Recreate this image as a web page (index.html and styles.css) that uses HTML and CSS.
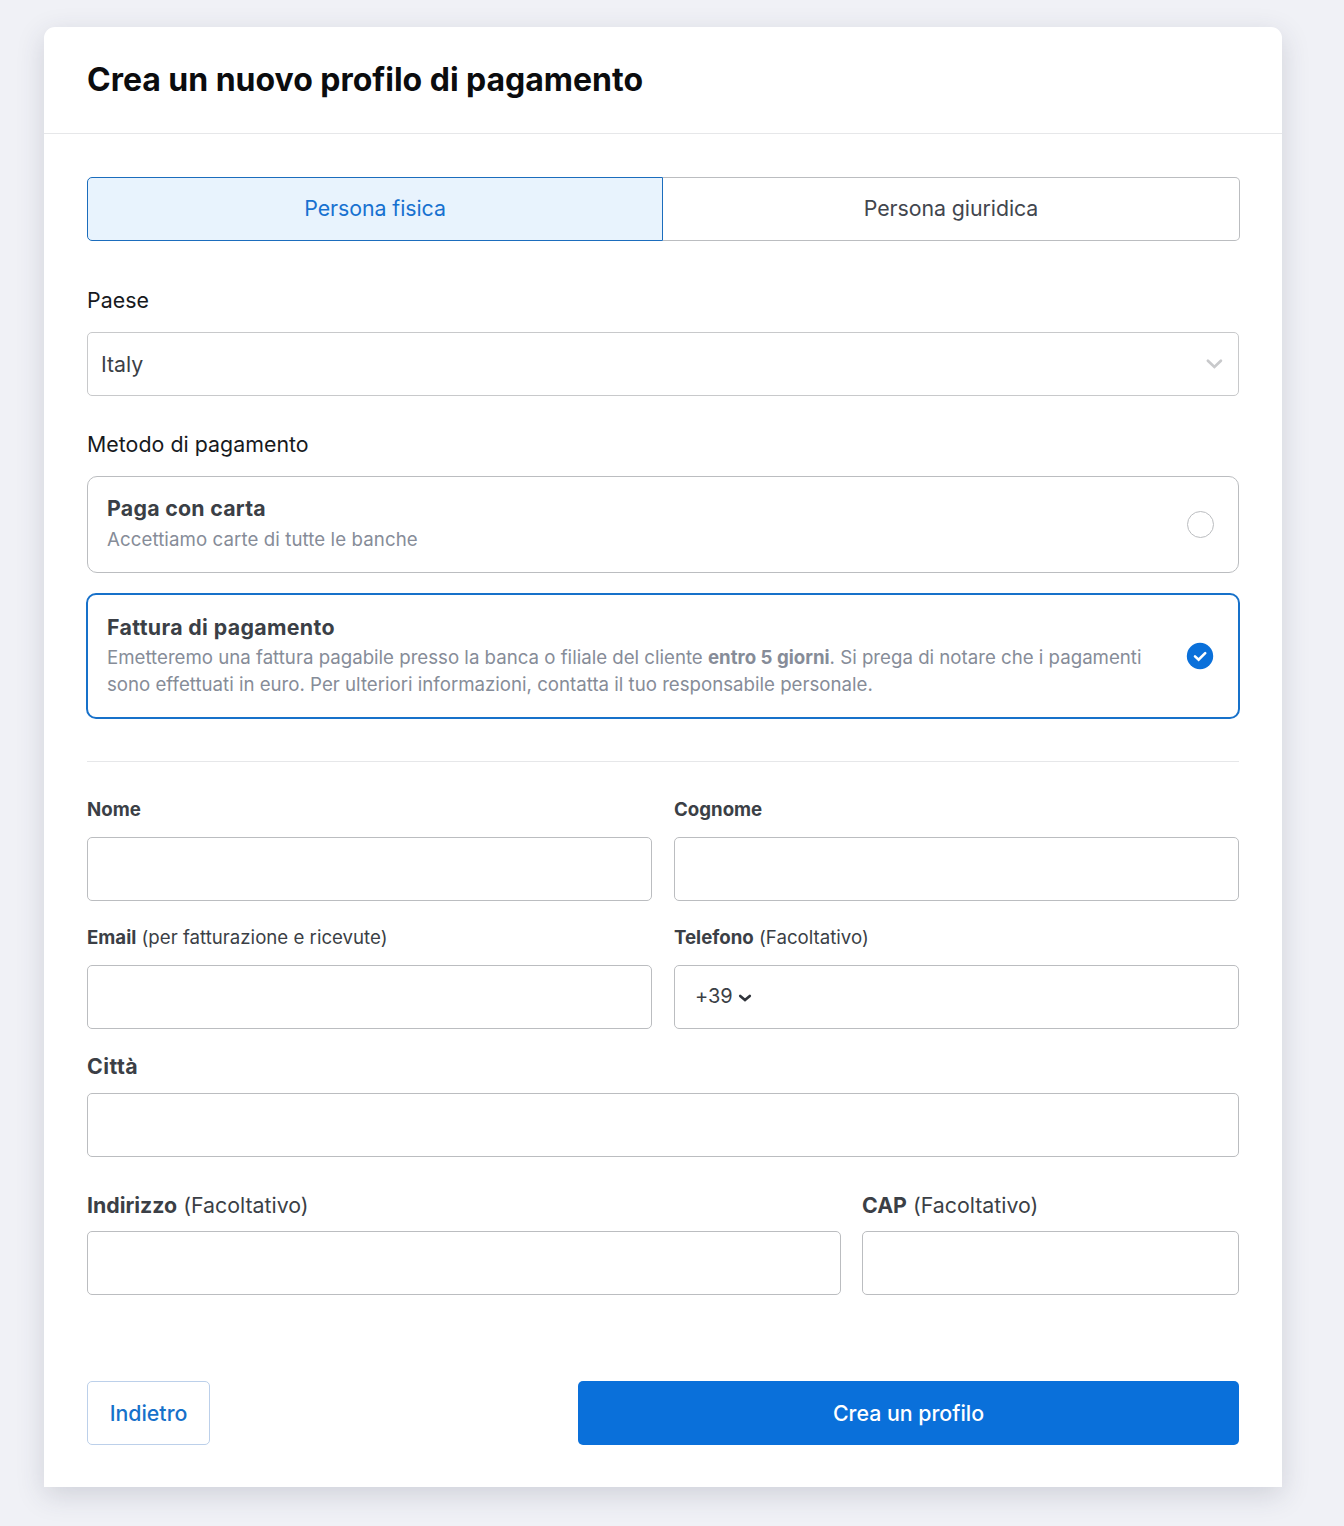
FILE: index.html
```html
<!DOCTYPE html>
<html lang="it">
<head>
<meta charset="utf-8">
<title>Crea un nuovo profilo di pagamento</title>
<link rel="stylesheet" href="styles.css">
</head>
<body>
<main class="card">
  <header class="card-header"><h1>Crea un nuovo profilo di pagamento</h1></header>
  <form class="card-body">
    <div class="tabs">
      <button type="button" class="tab tab-active"><span>Persona fisica</span></button>
      <button type="button" class="tab"><span>Persona giuridica</span></button>
    </div>
    <div class="section-label country-label"><span>Paese</span></div>
    <div class="field select"><span class="country">Italy</span>
      <svg class="chevron" width="18" height="12" viewBox="0 0 18 12"><path d="M2.9 2.8l6.5 6.2 6.5-6.2" fill="none" stroke="#c8c9cb" stroke-width="2.7" stroke-linecap="round"/></svg>
    </div>
    <div class="section-label method-label"><span>Metodo di pagamento</span></div>
    <div class="option">
      <div class="option-text"><h2><span>Paga con carta</span></h2><p><span class="card-note">Accettiamo carte di tutte le banche</span></p></div>
      <span class="radio"></span>
    </div>
    <div class="option option-selected">
      <div class="option-text"><h2><span>Fattura di pagamento</span></h2>
        <p><span>Emetteremo una fattura pagabile presso la banca o filiale del cliente <b>entro 5 giorni</b>. Si prega di notare che i pagamenti</span><br><span>sono effettuati in euro. Per ulteriori informazioni, contatta il tuo responsabile personale.</span></p></div>
      <svg class="check" width="28" height="28" viewBox="0 0 28 28"><circle cx="14" cy="14" r="13.2" fill="#0a70da"/><path d="M9 14.4l3.6 3.3 6.6-6.6" fill="none" stroke="#fff" stroke-width="2.6" stroke-linecap="round"/></svg>
    </div>
    <hr>
    <div class="row names">
      <label><span class="caption small"><b>Nome</b></span><span class="field"></span></label>
      <label><span class="caption small"><b>Cognome</b></span><span class="field"></span></label>
    </div>
    <div class="row contacts">
      <label><span class="caption small"><b>Email</b> (per fatturazione e ricevute)</span><span class="field"></span></label>
      <label><span class="caption small"><b>Telefono</b> (Facoltativo)</span><span class="field phone"><span>+39</span><svg width="14" height="10" viewBox="0 0 14 10"><path d="M2.2 2.9l4.8 4.2 4.8-4.2" fill="none" stroke="#30343b" stroke-width="2.6" stroke-linecap="round"/></svg></span></label>
    </div>
    <div class="row city">
      <label><span class="caption"><b>Città</b></span><span class="field"></span></label>
    </div>
    <div class="row address">
      <label><span class="caption"><b>Indirizzo</b> (Facoltativo)</span><span class="field"></span></label>
      <label><span class="caption"><b>CAP</b> (Facoltativo)</span><span class="field"></span></label>
    </div>
    <footer class="actions">
      <button type="button" class="back">Indietro</button>
      <button type="button" class="submit">Crea un profilo</button>
    </footer>
  </form>
</main>
</body>
</html>
```
FILE: styles.css
```css
* { box-sizing: border-box; }
body { margin: 0; padding: 27px 62px 39px 44px; background: #f0f1f6; font-family: Inter, sans-serif; font-feature-settings: "calt" 0, "liga" 0, "dlig" 0; color: #3b3f46; font-size: 21.33px; }
h1, h2, p { margin: 0; }
button { font: inherit; }
.card { height: 1460px; background: #fff; border-radius: 11px 11px 0 0; box-shadow: 0 8px 28px rgba(50, 55, 75, .17); }
.card-header { height: 107px; padding: 33px 43px; border-bottom: 1px solid #e6e7e9; color: #0b0c0e; }
.card-header h1 { font-size: 32px; line-height: 40px; font-weight: 700; letter-spacing: -.02px; }
.card-body { padding: 43px 43px 0; }
.tabs { display: grid; grid-template-columns: 576px 577px; width: 1153px; height: 64px; }
.tab { padding: 0 0 2px; letter-spacing: -.06px; color: #42464e; background: #fff; border: 1px solid #bbbdc0; border-left: 0; border-radius: 0 5px 5px 0; }
.tab-active { color: #1771d0; background: #e8f3fd; border: 1px solid #1b6dbd; border-radius: 5px 0 0 5px; }
.section-label { height: 48px; color: #17191d; line-height: 32px; letter-spacing: .04px; }
.country-label { margin-top: 43px; }
.method-label { margin-top: 32px; }
.field { display: block; height: 64px; background: #fff; border: 1px solid #bbbdc0; border-radius: 5px; }
.select { display: flex; align-items: center; justify-content: space-between; padding: 0 15px 0 13px; border-color: #c8c9cb; }
.option { display: flex; align-items: center; justify-content: space-between; height: 97px; padding: 0 24px 0 19px; border: 1px solid #bbbdc0; border-radius: 10px; }
.option-text { padding-bottom: 3px; }
.option h2 { font-size: 21.33px; line-height: 30px; padding-bottom: 3px; font-weight: 700; letter-spacing: .26px; }
.option p { font-size: 18.67px; line-height: 27px; color: #868c98; white-space: nowrap; }
.card-note { letter-spacing: .09px; }
b { font-weight: 700; }
.radio { width: 27px; height: 27px; border: 1px solid #bbbdc0; border-radius: 50%; }
.option-selected { height: 126px; margin: 20px -1px 0; padding: 0 24px 0 19px; border: 2px solid #1771ca; }
.option-selected h2 { line-height: 32px; padding-bottom: 1px; letter-spacing: .35px; }
hr { height: 1px; margin: 42px 0 0; border: 0; background: #e6e7e9; }
.row { display: grid; grid-template-columns: 1fr 1fr; gap: 22px; }
.names { margin-top: 31px; }
.contacts, .city { margin-top: 20px; }
.city { grid-template-columns: 1fr; }
.city b { letter-spacing: .45px; }
.address { margin-top: 30px; grid-template-columns: 754px 1fr; gap: 21px; }
.caption { display: block; height: 44px; line-height: 34px; }
.address .caption { line-height: 36px; }
.small { font-size: 18.67px; }
.phone { display: flex; align-items: center; gap: 5px; padding: 0 20px 2px; font-size: 20px; }
.phone svg { margin-top: 4px; }
.actions { display: flex; justify-content: space-between; margin-top: 86px; }
.actions button { height: 64px; padding: 0; border-radius: 5px; font-weight: 500; }
.actions .back { width: 123px; color: #1771ca; background: #fff; border: 1px solid #bcd0ea; }
.actions .submit { width: 661px; color: #fff; background: #0a70da; border: 0; }
```
